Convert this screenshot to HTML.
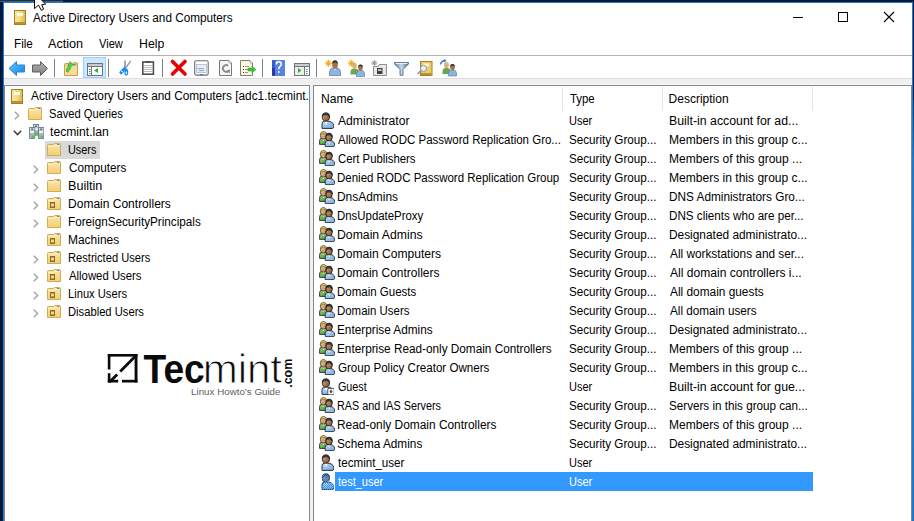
<!DOCTYPE html>
<html><head><meta charset="utf-8">
<style>
*{margin:0;padding:0;box-sizing:border-box}
html,body{width:914px;height:521px;overflow:hidden;background:#001a38}
body{position:relative;font-family:"Liberation Sans",sans-serif;font-size:11.5px;color:#000}
.a{position:absolute}
.t{position:absolute;white-space:nowrap;line-height:19px}
.r{position:absolute;white-space:nowrap;line-height:18px}
.x{position:absolute;white-space:nowrap;line-height:30px;transform-origin:0 0}
svg{position:absolute;overflow:visible}
</style></head><body>
<svg width="0" height="0" style="position:absolute">
<defs>
<linearGradient id="gb" x1="0" x2="1"><stop offset="0" stop-color="#f6e6a0"/><stop offset=".5" stop-color="#f3dc84"/><stop offset="1" stop-color="#d9b94c"/></linearGradient>
<linearGradient id="gf" x1="0" y1="0" x2="0" y2="1"><stop offset="0" stop-color="#fbe6a8"/><stop offset="1" stop-color="#f3cf72"/></linearGradient>
<symbol id="book" viewBox="0 0 12 15">
  <rect x=".5" y=".5" width="11" height="14" fill="url(#gb)" stroke="#a8801e"/>
  <rect x="3" y="3" width="6" height="3" fill="#fffbe8"/>
  <rect x="1" y="12" width="10" height="2" fill="#b89430"/>
</symbol>
<symbol id="fold" viewBox="0 0 14 13">
  <path d="M.5 12.5V2.5Q.5 1.5 1.5 1.5H6.5L7.5 .5H12.5Q13.5 .5 13.5 1.5V12.5Z" fill="url(#gf)" stroke="#d2ab55"/>
  <path d="M1 3.5H6.5L7.5 2.5H13" fill="none" stroke="#fff3c8" stroke-width=".8"/>
  <rect x="10" y="1" width="2.5" height="1" fill="#5a86d0"/>
</symbol>
<symbol id="ou" viewBox="0 0 14 13">
  <use href="#fold" width="14" height="13"/>
  <rect x="3" y="5" width="5" height="6" fill="#8c6c1c"/>
  <rect x="4" y="6.5" width="3" height="3" fill="#e8d8a0"/>
</symbol>
<symbol id="dom" viewBox="0 0 15 15"><g transform="translate(4 0)">
  <rect x=".4" y=".4" width="5.2" height="10.799999999999999" fill="#b4bcc6" stroke="#68727e" stroke-width=".8"/>
  <rect x="1" y="1" width="4" height="2.2" fill="#eef2f6"/>
  <ellipse cx="3" cy="2.1" rx="1.5" ry=".7" fill="#1a2a50"/>
  <rect x="1" y="4.2" width="4" height="1.8" fill="#f4f8fc"/>
  <rect x="1" y="6.8" width="4" height="3.5999999999999996" fill="#a8b4c0"/>
  <circle cx="3.6" cy="9.6" r="1.3" fill="#30d830"/>
</g><g transform="translate(0.2 3)">
  <rect x=".4" y=".4" width="5.2" height="11.0" fill="#b4bcc6" stroke="#68727e" stroke-width=".8"/>
  <rect x="1" y="1" width="4" height="2.2" fill="#eef2f6"/>
  <ellipse cx="3" cy="2.1" rx="1.5" ry=".7" fill="#1a2a50"/>
  <rect x="1" y="4.2" width="4" height="1.8" fill="#f4f8fc"/>
  <rect x="1" y="6.8" width="4" height="3.8000000000000007" fill="#a8b4c0"/>
  <circle cx="3.6" cy="9.8" r="1.3" fill="#30d830"/>
</g><g transform="translate(9.2 3)">
  <rect x=".4" y=".4" width="5.2" height="11.0" fill="#b4bcc6" stroke="#68727e" stroke-width=".8"/>
  <rect x="1" y="1" width="4" height="2.2" fill="#eef2f6"/>
  <ellipse cx="3" cy="2.1" rx="1.5" ry=".7" fill="#1a2a50"/>
  <rect x="1" y="4.2" width="4" height="1.8" fill="#f4f8fc"/>
  <rect x="1" y="6.8" width="4" height="3.8000000000000007" fill="#a8b4c0"/>
  <circle cx="3.6" cy="9.8" r="1.3" fill="#30d830"/>
</g></symbol>
<linearGradient id="face" x1="0" y1="0" x2="1" y2="1"><stop offset="0" stop-color="#dcae82"/><stop offset=".6" stop-color="#a87048"/><stop offset="1" stop-color="#6a4020"/></linearGradient>
<linearGradient id="shirt" x1="0" y1="0" x2="1" y2="1"><stop offset="0" stop-color="#b8dcfa"/><stop offset="1" stop-color="#78a8d8"/></linearGradient>
<symbol id="user" viewBox="0 0 13 17">
  <path d="M1 16.4V11.6Q1 9.6 3 9.3H8.5Q11 9.6 12.4 12.2Q13 13.5 12.8 15.2Q12.5 16.4 11.2 16.4Z" fill="url(#shirt)" stroke="#141c24" stroke-width=".9"/>
  <rect x="3.6" y="7.4" width="3.4" height="2.6" fill="#7a4a24"/>
  <path d="M3.4 9.5L5.2 13.2L6.8 9.5Z" fill="#f6fafe"/>
  <ellipse cx="4.9" cy="5" rx="3.6" ry="4.1" fill="url(#face)" stroke="#141c24" stroke-width=".8"/>
  <path d="M1.4 4.4Q1.2 .9 4.9 .9Q8.6 .9 8.5 4.8Q7.6 2.6 5 2.8Q2.4 2.6 1.4 4.4Z" fill="#3a4248" stroke="#141c24" stroke-width=".6"/>
</symbol>
<linearGradient id="face2" x1="0" y1="0" x2="1" y2="1"><stop offset="0" stop-color="#f0d0a8"/><stop offset=".7" stop-color="#c89868"/><stop offset="1" stop-color="#906038"/></linearGradient>
<linearGradient id="green" x1="0" y1="0" x2="1" y2="1"><stop offset="0" stop-color="#9ad27a"/><stop offset="1" stop-color="#4a9038"/></linearGradient>
<symbol id="group" viewBox="0 0 16 16">
  <path d="M.6 13.4V9.8Q.6 7.5 2.6 7.2H6.4Q8.4 7.4 9 9.6V13.4Z" fill="url(#green)" stroke="#141c14" stroke-width=".8"/>
  <rect x="3.3" y="6" width="2.6" height="2" fill="#a87848"/>
  <path d="M3.2 7.4L4.5 10.2L5.8 7.4Z" fill="#f4f8f0"/>
  <ellipse cx="4.5" cy="4.4" rx="3.1" ry="3.8" fill="url(#face2)" stroke="#2a2418" stroke-width=".7"/>
  <path d="M1.4 4.2Q1.1 .6 4.5 .6Q7.9 .6 7.7 4.4Q7 2.2 4.5 2.4Q2.2 2.2 1.4 4.2Z" fill="#e8d070" stroke="#5a4a18" stroke-width=".5"/>
  <path d="M6.2 15.6V12Q6.2 10 8.2 9.6H12Q14.2 9.9 15.2 11.8Q15.8 13 15.6 14.4Q15.4 15.6 14.2 15.6Z" fill="url(#shirt)" stroke="#141c24" stroke-width=".8"/>
  <rect x="8.8" y="8" width="3" height="2.4" fill="#7a4a24"/>
  <path d="M8.6 9.8L10.2 12.6L11.6 9.8Z" fill="#f6fafe"/>
  <ellipse cx="10.1" cy="6.1" rx="3.2" ry="3.9" fill="url(#face)" stroke="#141c24" stroke-width=".8"/>
  <path d="M6.9 5.6Q6.7 2.2 10.1 2.2Q13.5 2.2 13.3 5.9Q12.5 3.9 10.2 4.1Q7.9 3.9 6.9 5.6Z" fill="#3a4248" stroke="#141c24" stroke-width=".6"/>
</symbol>
<symbol id="guest" viewBox="0 0 13 17">
  <use href="#user" width="13" height="17"/>
  <rect x="6.8" y="10.4" width="6.4" height="6.4" rx="1.2" fill="#fff" stroke="#404040" stroke-width=".8"/>
  <path d="M8.3 13.2H11.7L10 15.4Z M9.4 11.8H10.6V13.4H9.4Z" fill="#303030"/>
</symbol>
<pattern id="dith" width="2" height="2" patternUnits="userSpaceOnUse"><rect width="1" height="1" fill="#3399ff"/><rect x="1" y="1" width="1" height="1" fill="#3399ff"/></pattern>
<symbol id="usersil" viewBox="0 0 13 17">
  <path d="M1 16.4V11.6Q1 9.6 3 9.3H8.5Q11 9.6 12.4 12.2Q13 13.5 12.8 15.2Q12.5 16.4 11.2 16.4Z" fill="url(#dith)" stroke="url(#dith)" stroke-width=".9"/>
  <rect x="3.6" y="7.4" width="3.4" height="2.6" fill="url(#dith)"/>
  <ellipse cx="4.9" cy="5" rx="3.6" ry="4.1" fill="url(#dith)" stroke="url(#dith)" stroke-width=".8"/>
</symbol>
<symbol id="chr" viewBox="0 0 6 9"><path d="M.8 .8L4.6 4.5L.8 8.2" fill="none" stroke="#a6a6a6" stroke-width="1.5"/></symbol>
<symbol id="chd" viewBox="0 0 9 6"><path d="M.8 .8L4.5 4.6L8.2 .8" fill="none" stroke="#404040" stroke-width="1.5"/></symbol>
</defs></svg>

<div class="a" style="left:0;top:0;width:63px;height:1px;background:#17304e"></div>
<div class="a" style="left:0;top:1px;width:63px;height:1px;background:#4c5c6c"></div>
<div class="a" style="left:3px;top:2px;width:910px;height:519px;background:#1c7bd6"></div>
<div class="a" style="left:4px;top:3px;width:908px;height:518px;background:#fff"></div>
<div class="a" style="left:913px;top:100px;width:1px;height:421px;background:linear-gradient(#0a3a70,#1878c8 15%,#1a80d0 60%,#1470c0)"></div>

<svg style="left:14px;top:10px" width="12" height="15"><use href="#book" width="12" height="15"/></svg>
<div class="a" style="left:793px;top:17px;width:10px;height:1px;background:#000"></div>
<div class="a" style="left:838px;top:12px;width:10px;height:10px;border:1px solid #000"></div>
<svg style="left:884px;top:12px" width="10" height="10" viewBox="0 0 10 10"><path d="M0 0L10 10M10 0L0 10" stroke="#000" stroke-width="1.1"/></svg>

<div class="a" style="left:4px;top:55px;width:908px;height:1px;background:#b2b2b2"></div>
<div class="a" style="left:4px;top:78px;width:908px;height:443px;background:#f0f0f0"></div>
<div class="a" style="left:4px;top:78px;width:908px;height:1px;background:#dcdcdc"></div>
<div class="a" style="left:4px;top:84px;width:908px;height:1px;background:#f8f8f8"></div>
<div class="a" style="left:4px;top:85px;width:306px;height:436px;background:#fff;border:1px solid #828790;border-bottom:none"></div>
<div class="a" style="left:313px;top:85px;width:599px;height:436px;background:#fff;border:1px solid #828790;border-bottom:none"></div>

<svg style="left:0;top:0" width="914" height="80" viewBox="0 0 914 80">
<defs>
<linearGradient id="tbblue" x1="0" y1="0" x2="1" y2="1"><stop offset="0" stop-color="#5cc8ff"/><stop offset="1" stop-color="#1c7ee0"/></linearGradient>
<linearGradient id="tbgray" x1="0" y1="0" x2="0" y2="1"><stop offset="0" stop-color="#b0b0b0"/><stop offset="1" stop-color="#808080"/></linearGradient>
<linearGradient id="tbfun" x1="0" y1="0" x2="1" y2="0"><stop offset="0" stop-color="#5f7d9c"/><stop offset=".5" stop-color="#c8d8e8"/><stop offset="1" stop-color="#4a6a8a"/></linearGradient>
</defs>
<!-- separators -->
<g fill="#808080"><rect x="54" y="59" width="1" height="18"/><rect x="108" y="59" width="1" height="18"/><rect x="162" y="59" width="1" height="18"/><rect x="262" y="59" width="1" height="18"/><rect x="316" y="59" width="1" height="18"/></g>
<!-- back -->
<path d="M9 68.5L16.5 61.5V65H24.5V72H16.5V75.5Z" fill="url(#tbblue)" stroke="#2a86d8" stroke-width="1" stroke-linejoin="round"/>
<!-- forward -->
<path d="M47.5 68.5L40.5 61.5V65H32.5V72H40.5V75.5Z" fill="url(#tbgray)" stroke="#606060" stroke-width="1" stroke-linejoin="round"/>
<!-- up folder -->
<path d="M64.5 75.5V64.5Q64.5 63.5 65.5 63.5H72.5L73.5 62.8H77Q77.5 62.8 77.5 63.8V75.5Z" fill="#f2d07a" stroke="#c8a048"/>
<path d="M65 67H77" stroke="#f8e4a8" stroke-width="1"/>
<rect x="65" y="67.5" width="12" height="7.5" fill="#f6dc96"/>
<ellipse cx="74.5" cy="64.6" rx="1.3" ry=".8" fill="#4a78d8"/>
<path d="M66.3 71.5Q66.5 67 69.3 65.6L67.8 65.6L70.2 61.5L73.2 65.3L71.4 65.6Q70.8 69.5 67.8 72.3Z" fill="#48d848" stroke="#28a028" stroke-width=".6"/>
<!-- show/hide tree (pressed) -->
<rect x="83.5" y="57.5" width="22" height="20" fill="#cce8ff" stroke="#99d1ff"/>
<rect x="87.5" y="63.5" width="15" height="12" fill="#fff" stroke="#707478"/>
<rect x="88" y="64" width="14" height="2" fill="#c8ccd0"/>
<rect x="88" y="66" width="14" height="1" fill="#707478"/>
<rect x="91" y="67" width="1" height="8" fill="#707478"/>
<g fill="#3a7ac8"><rect x="89" y="69" width="1.5" height="1"/><rect x="89" y="71" width="1.5" height="1"/><rect x="89" y="73" width="1.5" height="1"/></g>
<path d="M94 70.5L98 68V73Z" fill="#36b036"/>
<!-- scissors -->
<path d="M125 60.5V68" stroke="#7a8490" stroke-width="1.4"/>
<path d="M130.8 60.8L125.6 68" stroke="#8aa0b8" stroke-width="1.4"/>
<path d="M124.6 68.6L121 72.6" stroke="#1a8ef0" stroke-width="3.2" stroke-linecap="round"/>
<circle cx="122" cy="71.5" r=".8" fill="#fff"/>
<ellipse cx="126.3" cy="72.2" rx="1.9" ry="3.4" fill="#1a8ef0"/>
<ellipse cx="126.4" cy="72.8" rx=".7" ry="1.4" fill="#fff"/>
<!-- clipboard -->
<rect x="142.8" y="62" width="10.6" height="12.2" fill="#fff" stroke="#505050" stroke-width="1.6"/>
<rect x="145.5" y="61" width="5" height="2" fill="#505050"/>
<g fill="#a8a8a8"><rect x="144" y="65" width="8" height=".8"/><rect x="144" y="67" width="8" height=".8"/><rect x="144" y="69" width="8" height=".8"/><rect x="144" y="71" width="8" height=".8"/></g>
<!-- delete X -->
<path d="M172.5 61.5L185 74M185 61.5L172.5 74" stroke="#e60000" stroke-width="3.6" stroke-linecap="round"/>
<!-- properties -->
<rect x="194.7" y="60.8" width="13.5" height="14.3" rx="1.5" fill="#fff" stroke="#6a6e72" stroke-width="1.1"/>
<rect x="196.5" y="64.5" width="10" height="8" fill="#e8eef6" stroke="#b0bcc8" stroke-width=".8"/>
<g fill="#8090a0"><rect x="199" y="68.3" width="5" height=".8"/><rect x="199" y="70.3" width="5" height=".8"/></g>
<rect x="197.5" y="68" width="1" height="1" fill="#1a8ef0"/>
<rect x="200" y="74" width="3" height="1.2" fill="#1a8ef0"/>
<!-- refresh -->
<path d="M219.5 75.5V60.5H229L231.5 63V75.5Z" fill="#f6f6f6" stroke="#7a7a7a"/>
<path d="M229 60.5V63H231.5" fill="#fff" stroke="#9a9a9a" stroke-width=".8"/>
<path d="M228.2 65.6A3.4 3.4 0 1 0 228.6 71" fill="none" stroke="#8c8c8c" stroke-width="1.9"/>
<path d="M226.5 70.2L230.2 69.6L229.6 73.4Z" fill="#8c8c8c"/>
<!-- export list -->
<path d="M240.5 75.5V60.5H250L252.5 63V75.5Z" fill="#fdf6d8" stroke="#808080"/>
<path d="M250 60.5V63H252.5" fill="#fff" stroke="#9a9a9a" stroke-width=".8"/>
<g fill="#303030"><rect x="243" y="66" width="1" height="1"/><rect x="243" y="69" width="1" height="1"/><rect x="243" y="72" width="1" height="1"/></g>
<g fill="#8090a0"><rect x="245" y="66" width="4" height=".9"/><rect x="245" y="69" width="3" height=".9"/><rect x="245" y="72" width="3" height=".9"/></g>
<path d="M248 68H252V66L256 69.5L252 73V71H248Z" fill="#40c040" stroke="#2aa02a" stroke-width=".5"/>
<!-- help -->
<rect x="272" y="60" width="13" height="15.7" fill="#3a5ad0"/>
<rect x="275" y="60" width="10" height="15.7" fill="#5a82e0"/>
<rect x="272" y="68" width="3" height="7.7" fill="#2a3a9a"/>
<path d="M276.3 64.5Q276.3 61.8 278.8 61.8Q281.3 61.8 281.3 64.3Q281.3 65.8 279.6 66.8Q278.8 67.3 278.8 69.2" fill="none" stroke="#fff" stroke-width="1.5"/>
<circle cx="278.8" cy="72" r="1" fill="#fff"/>
<!-- action pane -->
<rect x="294.5" y="63.5" width="15" height="12" fill="#fff" stroke="#707478"/>
<rect x="295" y="64" width="14" height="2" fill="#c8ccd0"/>
<rect x="295" y="66" width="14" height="1" fill="#707478"/>
<rect x="304" y="67" width="1" height="8" fill="#707478"/>
<rect x="295" y="67" width="9" height="8" fill="#eeeeee"/>
<g fill="#3a7ac8"><rect x="306" y="69" width="1.5" height="1"/><rect x="306" y="71" width="1.5" height="1"/><rect x="306" y="73" width="1.5" height="1"/></g>
<path d="M298 68V73L301.5 70.5Z" fill="#36b036"/>
<!-- new user -->
<g transform="translate(328 60)">
<path d="M1.5 15.5V12.5Q1.5 8.5 5 8H9Q12.5 8.5 12.5 12.5V15.5Z" fill="#8cb6e2" stroke="#5a7090" stroke-width=".7"/>
<path d="M6 8.3L7 10.5L8 8.3Z" fill="#fff"/>
<ellipse cx="7" cy="5" rx="2.8" ry="3.8" fill="#a87048"/>
<path d="M4.2 4.5Q4 .3 7 .3Q10 .3 9.8 4.5Q9 2.3 7 2.6Q5 2.3 4.2 4.5Z" fill="#303030"/>
</g>
<g stroke="#f6a820" stroke-width="1.1"><path d="M328.4 59.8V66.8M324.9 63.3H331.9M326 60.9L330.8 65.7M330.8 60.9L326 65.7"/></g>
<!-- new group -->
<g transform="translate(350 62)">
<path d="M.5 12.5V10Q.5 7 3 6.5H6Q8.5 7 8.5 10V12.5Z" fill="#6aa850"/>
<ellipse cx="4.5" cy="3.8" rx="2.3" ry="3" fill="#d8b080"/>
<path d="M6.5 14.5V12Q6.5 9 9 8.5H12Q14.5 9 14.5 12V14.5Z" fill="#8cb6e2" stroke="#5a7090" stroke-width=".6"/>
<ellipse cx="10.5" cy="5.8" rx="2.3" ry="3" fill="#a87048"/>
<path d="M8.2 5.5Q8 2.5 10.5 2.5Q13 2.5 12.8 5.5Q12 4 10.5 4.2Q9 4 8.2 5.5Z" fill="#303030"/>
</g>
<g stroke="#f6a820" stroke-width="1.1"><path d="M351.4 59.8V66.8M347.9 63.3H354.9M349 60.9L353.8 65.7M353.8 60.9L349 65.7"/></g>
<!-- new OU -->
<path d="M373.5 75.5V66.5H378L379 64.5H386.5V75.5Z" fill="#e8e8e8" stroke="#909090"/>
<rect x="377" y="68" width="5.5" height="6" fill="#404040"/>
<rect x="378" y="69.2" width="3.5" height="1.8" fill="#d0d0d0"/>
<g stroke="#909090" stroke-width="1"><path d="M374.3 60V66M371.3 63H377.3M372.2 60.9L376.4 65.1M376.4 60.9L372.2 65.1"/></g>
<!-- filter -->
<path d="M394.5 62.5H408.5V64L403 69.5V75.3H400V69.5L394.5 64Z" fill="url(#tbfun)" stroke="#4a6a8a" stroke-width=".8"/>
<rect x="395.5" y="63" width="12" height="1" fill="#e8f0f8"/>
<!-- find -->
<rect x="420.5" y="61.5" width="11.5" height="14" fill="#e8cc6a" stroke="#a8801e"/>
<rect x="423" y="63.5" width="6" height="3" fill="#fff6d0"/>
<rect x="421" y="73" width="10.5" height="2" fill="#b89430"/>
<path d="M421 70.5L417.5 74" stroke="#909090" stroke-width="1.5"/>
<circle cx="423.5" cy="68.4" r="3" fill="#e8f0f8" stroke="#8898a8" stroke-width="1"/>
<!-- add to group -->
<path d="M440.5 64.5Q441 61 445 60.5" fill="none" stroke="#1a7ad8" stroke-width="1.3"/>
<path d="M444 59L446.5 60.5L444.5 62.5Z" fill="#1a7ad8"/>
<g transform="translate(442 61)">
<path d="M.5 13V10.5Q.5 7.5 3 7H6Q8.5 7.5 8.5 10.5V13Z" fill="#6aa850"/>
<ellipse cx="4.5" cy="4.2" rx="2.3" ry="3" fill="#d8b080"/>
<path d="M2.2 4Q2 1 4.5 1Q7 1 6.8 4Q6 2.5 4.5 2.7Q3 2.5 2.2 4Z" fill="#d8c070"/>
<path d="M6.5 15V12.5Q6.5 9.5 9 9H12Q14.5 9.5 14.5 12.5V15Z" fill="#8cb6e2" stroke="#5a7090" stroke-width=".6"/>
<ellipse cx="10.5" cy="6.3" rx="2.3" ry="3" fill="#a87048"/>
<path d="M8.2 6Q8 3 10.5 3Q13 3 12.8 6Q12 4.5 10.5 4.7Q9 4.5 8.2 6Z" fill="#303030"/>
</g>
</svg>

<div class="a" style="left:45px;top:141px;width:55px;height:18px;background:#d9d9d9"></div>
<div class="a" style="left:5px;top:86px;width:304px;height:435px;overflow:hidden">
<svg style="left:6px;top:3px" width="12" height="15"><use href="#book" width="12" height="15"/></svg>
<svg style="left:9px;top:25px" width="6" height="9"><use href="#chr" width="6" height="9"/></svg>
<svg style="left:23px;top:21px" width="14" height="13"><use href="#fold" width="14" height="13"/></svg>
<svg style="left:7.5px;top:44px" width="9" height="6"><use href="#chd" width="9" height="6"/></svg>
<svg style="left:24px;top:38px" width="15" height="15"><use href="#dom" width="15" height="15"/></svg>
<svg style="left:42px;top:57px" width="14" height="13"><use href="#fold" width="14" height="13"/></svg>
<svg style="left:28px;top:79px" width="6" height="9"><use href="#chr" width="6" height="9"/></svg>
<svg style="left:42px;top:75px" width="14" height="13"><use href="#fold" width="14" height="13"/></svg>
<svg style="left:28px;top:97px" width="6" height="9"><use href="#chr" width="6" height="9"/></svg>
<svg style="left:42px;top:93px" width="14" height="13"><use href="#fold" width="14" height="13"/></svg>
<svg style="left:28px;top:115px" width="6" height="9"><use href="#chr" width="6" height="9"/></svg>
<svg style="left:42px;top:111px" width="14" height="13"><use href="#ou" width="14" height="13"/></svg>
<svg style="left:28px;top:133px" width="6" height="9"><use href="#chr" width="6" height="9"/></svg>
<svg style="left:42px;top:129px" width="14" height="13"><use href="#fold" width="14" height="13"/></svg>
<svg style="left:42px;top:147px" width="14" height="13"><use href="#ou" width="14" height="13"/></svg>
<svg style="left:28px;top:169px" width="6" height="9"><use href="#chr" width="6" height="9"/></svg>
<svg style="left:42px;top:165px" width="14" height="13"><use href="#ou" width="14" height="13"/></svg>
<svg style="left:28px;top:187px" width="6" height="9"><use href="#chr" width="6" height="9"/></svg>
<svg style="left:42px;top:183px" width="14" height="13"><use href="#ou" width="14" height="13"/></svg>
<svg style="left:28px;top:205px" width="6" height="9"><use href="#chr" width="6" height="9"/></svg>
<svg style="left:42px;top:201px" width="14" height="13"><use href="#ou" width="14" height="13"/></svg>
<svg style="left:28px;top:223px" width="6" height="9"><use href="#chr" width="6" height="9"/></svg>
<svg style="left:42px;top:219px" width="14" height="13"><use href="#ou" width="14" height="13"/></svg>
</div>
<svg style="left:0;top:0" width="914" height="521" viewBox="0 0 914 521">
<g fill="#0a0a0a">
<rect x="107.8" y="354" width="29.7" height="2.6"/>
<rect x="134.6" y="354" width="2.9" height="28.5"/>
<rect x="107.8" y="354" width="2.6" height="15.5"/>
<rect x="107.8" y="373.2" width="2.6" height="9.3"/>
<rect x="107.8" y="379.8" width="10.4" height="2.7"/>
<rect x="121.9" y="379.8" width="15.6" height="2.7"/>
</g>
<g stroke="#0a0a0a" stroke-width="2.8">
<path d="M135.8 355.8L120.2 371.4"/>
<path d="M117.2 374.4L109.5 382.1"/>
</g>
<text transform="translate(143.5 383) scale(0.929 1.036)" x="0" y="0" font-family="Liberation Sans" font-weight="700" font-size="40" fill="#0a0a0a">Tec</text>
<text transform="translate(205.8 382.7) scale(1.05 1)" x="-3" y="0" font-family="Liberation Sans" font-size="40" fill="#0a0a0a" stroke="#fff" stroke-width="0.9">mint</text>
<text transform="translate(291.7 386.9) rotate(-90) scale(0.966 1.05)" x="-1" y="0" font-family="Liberation Sans" font-weight="700" font-size="13" fill="#0a0a0a">.com</text>
<text transform="translate(192.1 395) scale(1.03 1)" x="-1" y="0" font-family="Liberation Sans" font-size="9.5" fill="#5e5e5e">Linux Howto’s Guide</text>
</svg>

<div class="a" style="left:314px;top:86px;width:597px;height:25px;background:#fff"></div>
<div class="a" style="left:562px;top:87px;width:1px;height:24px;background:#e5e5e5"></div>
<div class="a" style="left:662px;top:87px;width:1px;height:24px;background:#e5e5e5"></div>
<div class="a" style="left:812px;top:87px;width:1px;height:24px;background:#e5e5e5"></div>
<svg style="left:321px;top:112px" width="13" height="17"><use href="#user" width="13" height="17"/></svg>
<svg style="left:319px;top:131px" width="16" height="16"><use href="#group" width="16" height="16"/></svg>
<svg style="left:319px;top:150px" width="16" height="16"><use href="#group" width="16" height="16"/></svg>
<svg style="left:319px;top:169px" width="16" height="16"><use href="#group" width="16" height="16"/></svg>
<svg style="left:319px;top:188px" width="16" height="16"><use href="#group" width="16" height="16"/></svg>
<svg style="left:319px;top:207px" width="16" height="16"><use href="#group" width="16" height="16"/></svg>
<svg style="left:319px;top:226px" width="16" height="16"><use href="#group" width="16" height="16"/></svg>
<svg style="left:319px;top:245px" width="16" height="16"><use href="#group" width="16" height="16"/></svg>
<svg style="left:319px;top:264px" width="16" height="16"><use href="#group" width="16" height="16"/></svg>
<svg style="left:319px;top:283px" width="16" height="16"><use href="#group" width="16" height="16"/></svg>
<svg style="left:319px;top:302px" width="16" height="16"><use href="#group" width="16" height="16"/></svg>
<svg style="left:319px;top:321px" width="16" height="16"><use href="#group" width="16" height="16"/></svg>
<svg style="left:319px;top:340px" width="16" height="16"><use href="#group" width="16" height="16"/></svg>
<svg style="left:319px;top:359px" width="16" height="16"><use href="#group" width="16" height="16"/></svg>
<svg style="left:321px;top:378px" width="13" height="17"><use href="#guest" width="13" height="17"/></svg>
<svg style="left:319px;top:397px" width="16" height="16"><use href="#group" width="16" height="16"/></svg>
<svg style="left:319px;top:416px" width="16" height="16"><use href="#group" width="16" height="16"/></svg>
<svg style="left:319px;top:435px" width="16" height="16"><use href="#group" width="16" height="16"/></svg>
<svg style="left:321px;top:454px" width="13" height="17"><use href="#user" width="13" height="17"/></svg>
<div class="a" style="left:335px;top:472px;width:478px;height:19px;background:#3399ff"></div>
<svg style="left:321px;top:473px" width="13" height="17"><use href="#user" width="13" height="17"/></svg>
<svg style="left:321px;top:473px" width="13" height="17"><use href="#usersil" width="13" height="17"/></svg>
<div class="x" style="left:33.30px;top:3px;font-size:12px;transform:scaleX(0.9779)">Active Directory Users and Computers</div>
<div class="x" style="left:13.53px;top:29px;font-size:12px;transform:scaleX(0.9722)">File</div>
<div class="x" style="left:48.00px;top:29px;font-size:12px;transform:scaleX(1.0515)">Action</div>
<div class="x" style="left:99.00px;top:29px;font-size:12px;transform:scaleX(0.9231)">View</div>
<div class="x" style="left:138.97px;top:29px;font-size:12px;transform:scaleX(1.0250)">Help</div>
<div class="x" style="left:320.79px;top:84px;font-size:12px;transform:scaleX(1.0097)">Name</div>
<div class="x" style="left:569.50px;top:84px;font-size:12px;transform:scaleX(0.9500)">Type</div>
<div class="x" style="left:668.60px;top:84px;font-size:12px">Description</div>
<div class="x" style="left:30.50px;top:81px;font-size:12px;transform:scaleX(0.9847)">Active Directory Users and Computers [adc1.tecmint.</div>
<div class="x" style="left:49.07px;top:99px;font-size:12px;transform:scaleX(0.9308)">Saved Queries</div>
<div class="x" style="left:49.80px;top:117px;font-size:12px;transform:scaleX(1.0138)">tecmint.lan</div>
<div class="x" style="left:67.99px;top:135px;font-size:12px;transform:scaleX(0.9067)">Users</div>
<div class="x" style="left:69.10px;top:153px;font-size:12px;transform:scaleX(0.9780)">Computers</div>
<div class="x" style="left:68.05px;top:171px;font-size:12px;transform:scaleX(1.0484)">Builtin</div>
<div class="x" style="left:68.10px;top:189px;font-size:12px">Domain Controllers</div>
<div class="x" style="left:68.12px;top:207px;font-size:12px;transform:scaleX(0.9756)">ForeignSecurityPrincipals</div>
<div class="x" style="left:68.10px;top:225px;font-size:12px;transform:scaleX(0.9960)">Machines</div>
<div class="x" style="left:68.17px;top:243px;font-size:12px;transform:scaleX(0.9273)">Restricted Users</div>
<div class="x" style="left:69.10px;top:261px;font-size:12px;transform:scaleX(0.9455)">Allowed Users</div>
<div class="x" style="left:68.17px;top:279px;font-size:12px;transform:scaleX(0.9306)">Linux Users</div>
<div class="x" style="left:68.17px;top:297px;font-size:12px;transform:scaleX(0.9338)">Disabled Users</div>
<div class="x" style="left:338.10px;top:106px;font-size:12px;transform:scaleX(1.0113)">Administrator</div>
<div class="x" style="left:569.08px;top:106px;font-size:12px;transform:scaleX(0.9167)">User</div>
<div class="x" style="left:668.67px;top:106px;font-size:12px;transform:scaleX(1.0258)">Built-in account for ad...</div>
<div class="x" style="left:338.10px;top:125px;font-size:12px;transform:scaleX(0.9578)">Allowed RODC Password Replication Gro...</div>
<div class="x" style="left:569.03px;top:125px;font-size:12px;transform:scaleX(0.9716)">Security Group...</div>
<div class="x" style="left:668.70px;top:125px;font-size:12px;transform:scaleX(1.0044)">Members in this group c...</div>
<div class="x" style="left:338.10px;top:144px;font-size:12px;transform:scaleX(0.9451)">Cert Publishers</div>
<div class="x" style="left:569.03px;top:144px;font-size:12px;transform:scaleX(0.9716)">Security Group...</div>
<div class="x" style="left:668.70px;top:144px;font-size:12px;transform:scaleX(1.0031)">Members of this group ...</div>
<div class="x" style="left:337.14px;top:163px;font-size:12px;transform:scaleX(0.9576)">Denied RODC Password Replication Group</div>
<div class="x" style="left:569.03px;top:163px;font-size:12px;transform:scaleX(0.9716)">Security Group...</div>
<div class="x" style="left:668.70px;top:163px;font-size:12px;transform:scaleX(1.0044)">Members in this group c...</div>
<div class="x" style="left:337.11px;top:182px;font-size:12px;transform:scaleX(0.9950)">DnsAdmins</div>
<div class="x" style="left:569.03px;top:182px;font-size:12px;transform:scaleX(0.9716)">Security Group...</div>
<div class="x" style="left:668.72px;top:182px;font-size:12px;transform:scaleX(0.9831)">DNS Administrators Gro...</div>
<div class="x" style="left:337.15px;top:201px;font-size:12px;transform:scaleX(0.9511)">DnsUpdateProxy</div>
<div class="x" style="left:569.03px;top:201px;font-size:12px;transform:scaleX(0.9716)">Security Group...</div>
<div class="x" style="left:668.73px;top:201px;font-size:12px;transform:scaleX(0.9701)">DNS clients who are per...</div>
<div class="x" style="left:337.08px;top:220px;font-size:12px;transform:scaleX(1.0193)">Domain Admins</div>
<div class="x" style="left:569.03px;top:220px;font-size:12px;transform:scaleX(0.9716)">Security Group...</div>
<div class="x" style="left:668.71px;top:220px;font-size:12px;transform:scaleX(0.9899)">Designated administrato...</div>
<div class="x" style="left:337.09px;top:239px;font-size:12px;transform:scaleX(1.0069)">Domain Computers</div>
<div class="x" style="left:569.03px;top:239px;font-size:12px;transform:scaleX(0.9716)">Security Group...</div>
<div class="x" style="left:669.70px;top:239px;font-size:12px;transform:scaleX(0.9844)">All workstations and ser...</div>
<div class="x" style="left:337.10px;top:258px;font-size:12px;transform:scaleX(0.9971)">Domain Controllers</div>
<div class="x" style="left:569.03px;top:258px;font-size:12px;transform:scaleX(0.9716)">Security Group...</div>
<div class="x" style="left:669.70px;top:258px;font-size:12px;transform:scaleX(1.0069)">All domain controllers i...</div>
<div class="x" style="left:337.14px;top:277px;font-size:12px;transform:scaleX(0.9585)">Domain Guests</div>
<div class="x" style="left:569.03px;top:277px;font-size:12px;transform:scaleX(0.9716)">Security Group...</div>
<div class="x" style="left:669.70px;top:277px;font-size:12px;transform:scaleX(0.9884)">All domain guests</div>
<div class="x" style="left:337.15px;top:296px;font-size:12px;transform:scaleX(0.9533)">Domain Users</div>
<div class="x" style="left:569.03px;top:296px;font-size:12px;transform:scaleX(0.9716)">Security Group...</div>
<div class="x" style="left:669.70px;top:296px;font-size:12px;transform:scaleX(0.9753)">All domain users</div>
<div class="x" style="left:337.12px;top:315px;font-size:12px;transform:scaleX(0.9823)">Enterprise Admins</div>
<div class="x" style="left:569.03px;top:315px;font-size:12px;transform:scaleX(0.9716)">Security Group...</div>
<div class="x" style="left:668.71px;top:315px;font-size:12px;transform:scaleX(0.9899)">Designated administrato...</div>
<div class="x" style="left:337.12px;top:334px;font-size:12px;transform:scaleX(0.9807)">Enterprise Read-only Domain Controllers</div>
<div class="x" style="left:569.03px;top:334px;font-size:12px;transform:scaleX(0.9716)">Security Group...</div>
<div class="x" style="left:668.70px;top:334px;font-size:12px;transform:scaleX(1.0031)">Members of this group ...</div>
<div class="x" style="left:338.10px;top:353px;font-size:12px;transform:scaleX(0.9656)">Group Policy Creator Owners</div>
<div class="x" style="left:569.03px;top:353px;font-size:12px;transform:scaleX(0.9716)">Security Group...</div>
<div class="x" style="left:668.70px;top:353px;font-size:12px;transform:scaleX(1.0044)">Members in this group c...</div>
<div class="x" style="left:338.10px;top:372px;font-size:12px;transform:scaleX(0.8969)">Guest</div>
<div class="x" style="left:569.08px;top:372px;font-size:12px;transform:scaleX(0.9167)">User</div>
<div class="x" style="left:668.67px;top:372px;font-size:12px;transform:scaleX(1.0252)">Built-in account for gue...</div>
<div class="x" style="left:337.20px;top:391px;font-size:12px;transform:scaleX(0.9009)">RAS and IAS Servers</div>
<div class="x" style="left:569.03px;top:391px;font-size:12px;transform:scaleX(0.9716)">Security Group...</div>
<div class="x" style="left:668.73px;top:391px;font-size:12px;transform:scaleX(0.9723)">Servers in this group can...</div>
<div class="x" style="left:337.11px;top:410px;font-size:12px;transform:scaleX(0.9919)">Read-only Domain Controllers</div>
<div class="x" style="left:569.03px;top:410px;font-size:12px;transform:scaleX(0.9716)">Security Group...</div>
<div class="x" style="left:668.70px;top:410px;font-size:12px;transform:scaleX(1.0031)">Members of this group ...</div>
<div class="x" style="left:337.12px;top:429px;font-size:12px;transform:scaleX(0.9837)">Schema Admins</div>
<div class="x" style="left:569.03px;top:429px;font-size:12px;transform:scaleX(0.9716)">Security Group...</div>
<div class="x" style="left:668.71px;top:429px;font-size:12px;transform:scaleX(0.9899)">Designated administrato...</div>
<div class="x" style="left:338.10px;top:448px;font-size:12px;transform:scaleX(0.9667)">tecmint_user</div>
<div class="x" style="left:569.08px;top:448px;font-size:12px;transform:scaleX(0.9167)">User</div>
<div class="x" style="left:338.10px;top:467px;font-size:12px;color:#fff;transform:scaleX(0.9163)">test_user</div>
<div class="x" style="left:569.08px;top:467px;font-size:12px;color:#fff;transform:scaleX(0.9167)">User</div>
<svg style="left:0;top:0" width="914" height="20" viewBox="0 0 914 20"><path d="M34.5 -7L34.5 8.6L38.5 5.1L41.4 10.5L43.6 9.1L41.7 4.8L45.6 4Z" fill="#fff" stroke="#000" stroke-width="1"/></svg>
</body></html>
